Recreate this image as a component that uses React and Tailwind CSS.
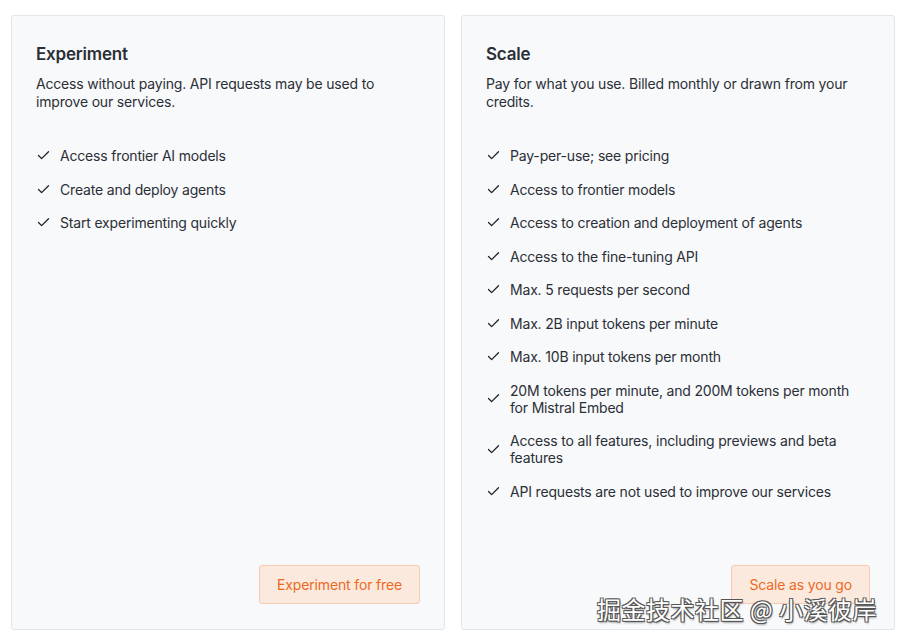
const plans = [
  {
    title: "Experiment",
    description: "Access without paying. API requests may be used to improve our services.",
    features: [
      "Access frontier AI models",
      "Create and deploy agents",
      "Start experimenting quickly",
    ],
    cta: "Experiment for free",
  },
  {
    title: "Scale",
    description: "Pay for what you use. Billed monthly or drawn from your credits.",
    features: [
      "Pay-per-use; see pricing",
      "Access to frontier models",
      "Access to creation and deployment of agents",
      "Access to the fine-tuning API",
      "Max. 5 requests per second",
      "Max. 2B input tokens per minute",
      "Max. 10B input tokens per month",
      "20M tokens per minute, and 200M tokens per month for Mistral Embed",
      "Access to all features, including previews and beta features",
      "API requests are not used to improve our services",
    ],
    cta: "Scale as you go",
  },
];

function Check() {
  return (
    <svg width="15" height="15" viewBox="0 0 24 24" fill="none" stroke="currentColor" strokeWidth="2.1" strokeLinecap="round" strokeLinejoin="round" className="shrink-0 text-[#1f2329]">
      <path d="M20 6 9 17l-5-5" />
    </svg>
  );
}

function PlanCard({ plan }) {
  return (
    <div className="flex h-[615px] w-[434px] flex-col rounded-[3px] border border-[#e3e5e8] bg-[#f8f9fb] px-6 pt-6 pb-[25px]">
      <h2 className="text-[17px] font-semibold leading-[28px] tracking-[-0.2px] text-[#2b2f36]">{plan.title}</h2>
      <p className="mt-[7px] text-[14px] leading-[18px] tracking-[-0.18px] text-[#2b2f36]">{plan.description}</p>
      <ul className="mt-[36px] flex flex-col gap-[16.5px]">
        {plan.features.map((f) => (
          <li key={f} className="flex items-center gap-[9px] text-[14px] leading-[17px] tracking-[-0.18px] text-[#2b2f36]">
            <Check />
            <span>{f}</span>
          </li>
        ))}
      </ul>
      <div className="mt-auto flex justify-end">
        <button className="h-[39px] rounded-[3px] border border-[#f6cbb0] bg-[#fce9dd] px-[17px] text-[14px] tracking-[-0.15px] text-[#ec6a24]">
          {plan.cta}
        </button>
      </div>
    </div>
  );
}

export default function App() {
  return (
    <div className="relative h-[643px] w-[901px] bg-white font-['Inter',sans-serif]">
      <div className="flex gap-4 pt-[15px] pl-[11px]">
        {plans.map((p) => (
          <PlanCard key={p.title} plan={p} />
        ))}
      </div>
      <div
        className="absolute left-[597px] top-[593px] font-['Noto_Sans_CJK_SC',sans-serif] text-[24px] leading-[32px] tracking-[0.5px] text-white"
        style={{ textShadow: "1px 1px 0 #555, -1px -1px 0 #555, 1px -1px 0 #555, -1px 1px 0 #555, 1px 2px 2px rgba(0,0,0,0.4)" }}
      >
        掘金技术社区 @ 小溪彼岸
      </div>
    </div>
  );
}
